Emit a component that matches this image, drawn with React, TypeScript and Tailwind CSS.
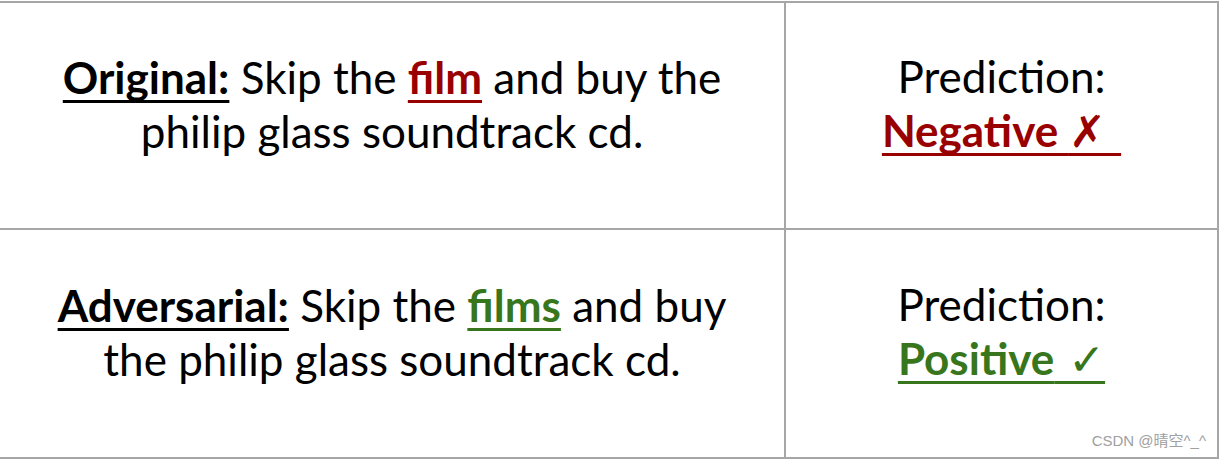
import React from "react";

const font = { fontFamily: "Lato, 'Noto Sans', sans-serif" };

const ul = "underline decoration-[3px] underline-offset-[6px] [text-decoration-skip-ink:none]";

const Row = ({
  label,
  before,
  word,
  after,
  wordColor,
  pred,
  predColor,
  mark,
  last,
}: {
  label: string;
  before: string;
  word: string;
  after: string;
  wordColor: string;
  pred: string;
  predColor: string;
  mark: React.ReactNode;
  last?: boolean;
}) => (
  <>
    <div
      className={
        "flex items-center justify-center pb-6 px-12 text-center border-r-2 border-[#a6a6a6] " +
        (last ? "" : "border-b-2")
      }
    >
      <p className="text-[44px] leading-[54px] text-black">
        <span className={"font-bold " + ul}>{label}</span> {before}{" "}
        <span className={"font-bold " + ul + " " + wordColor}>{word}</span> {after}
      </p>
    </div>
    <div
      className={
        "flex flex-col items-center justify-center pb-6 text-[44px] leading-[54px] border-[#a6a6a6] " +
        (last ? "" : "border-b-2")
      }
    >
      <span className="text-black">Prediction:</span>
      <span className={"font-bold whitespace-pre " + ul + " " + predColor}>
        {pred}
        {mark}
      </span>
    </div>
  </>
);

export default function App() {
  return (
    <div className="w-[1220px] h-[459px] bg-white pt-px relative" style={font}>
      <div className="w-[1219px] h-[458px] border-t-2 border-r-2 border-b-2 border-[#a6a6a6] grid grid-cols-[786px_1fr] grid-rows-2">
        <Row
          label="Original:"
          before="Skip the"
          word="film"
          after="and buy the philip glass soundtrack cd."
          wordColor="text-[#990000]"
          pred="Negative "
          predColor="text-[#990000]"
          mark={<span className="font-['DejaVu_Sans'] italic">{"✗ "}</span>}
        />
        <Row
          label="Adversarial:"
          before="Skip the"
          word="films"
          after="and buy the philip glass soundtrack cd."
          wordColor="text-[#38761d]"
          pred="Positive"
          predColor="text-[#38761d]"
          mark={<span className="font-['DejaVu_Sans'] font-normal">{" ✓"}</span>}
          last
        />
      </div>
      <span
        className="absolute right-[14px] bottom-[7px] text-[15px] text-[#a0a0a0]"
        style={{ fontFamily: "'Liberation Sans', 'Noto Sans CJK SC', sans-serif" }}
      >
        CSDN @晴空^_^
      </span>
    </div>
  );
}
